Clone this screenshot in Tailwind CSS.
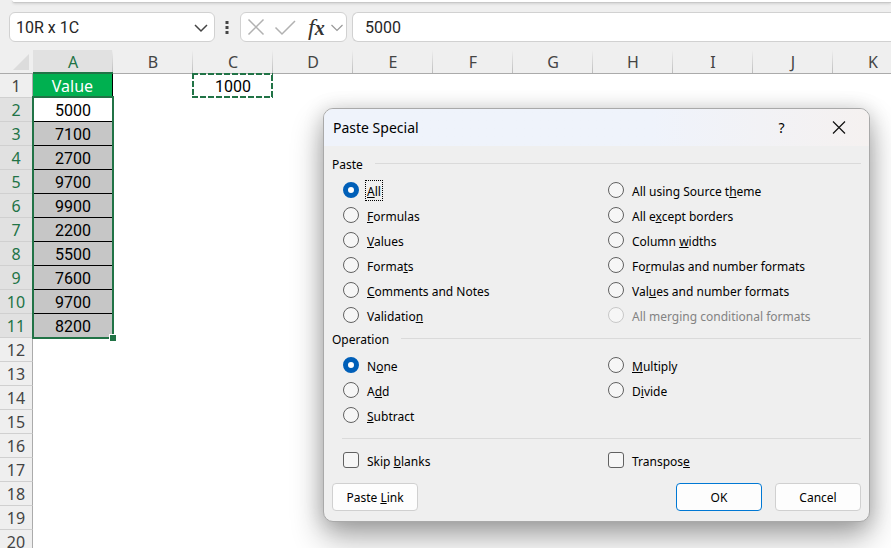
<!DOCTYPE html>
<html lang="en">
<head>
    <meta charset="UTF-8">
    <meta name="viewport" content="width=device-width, initial-scale=1.0">
    <title>Paste Special</title>
    <script src="https://cdn.jsdelivr.net/npm/@tailwindcss/browser@4"></script>
</head>
<body class="relative h-screen overflow-hidden bg-white font-['Noto_Sans',sans-serif] text-black">
    <!-- Formula bar -->
    <header class="bg-[#efefef]">
        <div class="ml-3 h-[3px] rounded-bl-lg border-b border-[#c8c8c8] bg-white shadow-sm"></div>
        <div class="flex h-[47px] items-start pt-[9px] pl-[9px]">
            <div class="flex h-[30px] w-[206px] items-center rounded-md border border-[#d1d1d1] bg-white pr-1 pl-1.5">
                <input type="text" value="10R x 1C" aria-label="Name box" class="min-w-0 flex-1 pt-px font-[Roboto,sans-serif] text-base text-[#262626] outline-none">
                <button type="button" aria-label="Open name list" class="p-px">
                    <svg class="size-4" viewBox="0 0 16 16" fill="none" stroke="#444" stroke-width="1.5"><path d="M2 6 8 12l6-6"/></svg>
                </button>
            </div>
            <svg class="mr-[9px] ml-2 mt-2 h-4 w-2" viewBox="0 0 8 16" fill="#444"><path d="M2.500 1h3v3h-3zM2.500 6h3v3h-3zM2.500 11h3v3h-3z"/></svg>
            <div class="flex h-[30px] w-[107px] items-center rounded-md border border-[#d1d1d1] bg-white">
                <button type="button" aria-label="Cancel entry" class="ml-1.5">
                    <svg class="size-[18px]" viewBox="0 0 18 18" fill="none" stroke="#b1b1b1" stroke-width="1.500"><path d="M1.500 1.500l15 15M16.500 1.500l-15 15"/></svg>
                </button>
                <button type="button" aria-label="Enter" class="ml-[9px]">
                    <svg class="h-[18px] w-[22px]" viewBox="0 0 22 18" fill="none" stroke="#b1b1b1" stroke-width="1.500"><path d="M1.500 9.500l6.500 6.500L21 3"/></svg>
                </button>
                <button type="button" aria-label="Insert function" class="ml-3 flex w-[18px] items-baseline font-['Liberation_Serif',serif] text-2xl leading-6 text-[#333] italic"><span>f</span><span class="text-xl leading-6 font-bold">x</span></button>
                <button type="button" aria-label="More functions" class="ml-1">
                    <svg class="size-3.5" viewBox="0 0 14 14" fill="none" stroke="#999" stroke-width="1.200"><path d="M1.500 5 7 10.500 12.500 5"/></svg>
                </button>
            </div>
            <input type="text" value="5000" aria-label="Formula" class="ml-[5px] h-[30px] min-w-0 flex-1 rounded-l-md border border-r-0 border-[#d1d1d1] bg-white px-3 font-[Roboto,sans-serif] text-base text-[#262626] outline-none">
        </div>
    </header>

    <!-- Worksheet -->
    <main class="relative">
        <table class="w-[913px] table-fixed border-separate border-spacing-0 text-center text-base leading-[22px]">
            <thead>
                <tr id="columns"></tr>
            </thead>
            <tbody id="rows"></tbody>
        </table>

        <!-- Selected range -->
        <div class="pointer-events-none absolute top-[46px] left-[32px] h-[243px] w-[82px] border-2 border-[#217346]">
            <span class="absolute -right-1 -bottom-1 size-[7px] border-t border-l border-white bg-[#217346]"></span>
        </div>
        <!-- Copied cell -->
        <svg class="pointer-events-none absolute top-[23px] left-[192px] h-[25px] w-[81px]" viewBox="0 0 81 25" fill="none" stroke="#217346" stroke-width="2" stroke-dasharray="6 2">
            <path d="M0 1H81M1 0V25M80 2V25M0 24H81"/>
        </svg>
    </main>

    <!-- Dialog -->
    <form role="dialog" aria-labelledby="dialogTitle" class="absolute top-[108px] left-[323px] w-[547px] rounded-[10px] border border-[#a9a9a9] bg-[#efefef] text-xs shadow-[0_16px_32px_rgba(0,0,0,0.32),0_2px_20px_rgba(0,0,0,0.18)]">
        <div class="flex h-[37px] items-center rounded-t-[9px] bg-linear-to-r from-[#eff3fb] from-60% to-[#f5f1f0] pr-px pl-[9px]">
            <h1 id="dialogTitle" class="flex-1 text-sm">Paste Special</h1>
            <button type="button" aria-label="Help" class="w-[55px] text-sm">?</button>
            <button type="button" aria-label="Close" class="flex w-[59px] justify-center">
                <svg class="size-3.5" viewBox="0 0 14 14" fill="none" stroke="#111" stroke-width="1.200"><path d="M1 0.500l12 12M13 0.500 1 12.500"/></svg>
            </button>
        </div>
        <div class="px-2 pt-[7px] pb-2.5">
            <fieldset>
                <legend class="flex h-[25px] w-full items-center gap-3 pb-1"><span class="pt-0.5">Paste</span><span class="h-px flex-1 bg-[#dadada]"></span></legend>
                <div id="pasteOptions" class="grid grid-flow-col grid-cols-[265px_1fr] grid-rows-6 pl-[11px]"></div>
            </fieldset>
            <fieldset>
                <legend class="flex h-[25px] w-full items-center gap-3 pb-1"><span class="pt-0.5">Operation</span><span class="h-px flex-1 bg-[#dadada]"></span></legend>
                <div id="operationOptions" class="grid grid-flow-col grid-cols-[265px_1fr] grid-rows-3 pl-[11px]"></div>
            </fieldset>
            <hr class="mt-2.5 mb-[9px] ml-2.5 border-[#dadada]">
            <div class="grid grid-cols-[265px_1fr] pl-[11px]">
                <label class="flex h-[25px] items-start gap-1.5 pt-0.5">
                    <input type="checkbox" class="mt-0.5 size-4 appearance-none rounded-[3px] border border-[#616161] bg-[#f6f6f6]">
                    <span class="px-0.5 pt-[3px] leading-[18px]">Skip <u>b</u>lanks</span>
                </label>
                <label class="flex h-[25px] items-start gap-1.5 pt-0.5">
                    <input type="checkbox" class="mt-0.5 size-4 appearance-none rounded-[3px] border border-[#616161] bg-[#f6f6f6]">
                    <span class="px-0.5 pt-[3px] leading-[18px]">Transpos<u>e</u></span>
                </label>
            </div>
            <div class="mt-2.5 flex gap-[13px]">
                <button type="button" class="mr-auto h-7 w-[86px] rounded border border-[#d0d0d0] bg-[#fdfdfd] pt-px">Paste <u>L</u>ink</button>
                <button type="submit" class="h-7 w-[86px] rounded border border-[#0078d4] bg-[#fdfdfd] pt-px">OK</button>
                <button type="button" class="h-7 w-[86px] rounded border border-[#d0d0d0] bg-[#fdfdfd] pt-px">Cancel</button>
            </div>
        </div>
    </form>

    <script>
        const columns = ['A', 'B', 'C', 'D', 'E', 'F', 'G', 'H', 'I', 'J', 'K'];
        const values = ['Value', 5000, 7100, 2700, 9700, 9900, 2200, 5500, 7600, 9700, 8200];

        // Underscore marks the access key
        const pasteOptions = [
            '_All', '_Formulas', '_Values', 'Forma_ts', '_Comments and Notes', 'Validatio_n',
            'All using Source t_heme', 'All e_xcept borders', 'Column _widths',
            'Fo_rmulas and number formats', 'Val_ues and number formats', 'All mer_ging conditional formats'
        ];
        const operationOptions = ['N_one', 'A_dd', '_Subtract', '_Multiply', 'D_ivide'];

        function renderHeader() {
            let html = `<th class="relative h-6 w-[33px] border-b border-[#ababab] bg-[#efefef] p-0">
                <svg class="absolute right-1 bottom-[3px] size-4" viewBox="0 0 16 16" fill="#dcdcdc"><path d="M16 0v16H0z"/></svg>
            </th>`;
            columns.forEach(name => {
                const state = name === 'A'
                    ? 'border-b-2 border-[#217346] bg-[#e1e1e1] pt-0.5 leading-5 text-[#217346]'
                    : 'border-b border-[#ababab] bg-[#efefef] pt-0 text-[#444]';
                html += `<th scope="col" class="relative h-6 w-20 px-0 pb-0 font-normal ${state}">${name}<span class="absolute inset-y-0 right-0 w-px bg-linear-to-b from-[#efefef] to-[#bdbdbd]"></span></th>`;
            });
            document.getElementById('columns').innerHTML = html;
        }

        function cellStyle(row, column) {
            if (column !== 'A' || row > 11) return 'pt-px';
            if (row === 1) return 'border-r border-black bg-[#00b050] text-white';
            if (row === 2) return 'border-b border-black bg-white pt-[3px] font-[Roboto,sans-serif] leading-5';
            return 'border-b border-black bg-[#c6c6c6] pt-[3px] font-[Roboto,sans-serif] leading-5';
        }

        function renderRows() {
            let html = '';
            for (let row = 1; row <= 20; row++) {
                const state = row >= 2 && row <= 11 ? 'bg-[#e1e1e1] text-[#217346]' : 'bg-[#efefef] text-[#444]';
                html += `<tr><th scope="row" class="h-6 border-r border-b border-r-[#ababab] border-b-[#d0d0d0] p-0 pt-px font-normal ${state}">${row}</th>`;
                columns.forEach(column => {
                    let value = '';
                    if (column === 'A') value = values[row - 1] || '';
                    if (column === 'C' && row === 1) value = '<span class="font-[Roboto,sans-serif]">1000</span>';
                    html += `<td class="h-6 px-0 pb-0 ${cellStyle(row, column)}">${value}</td>`;
                });
                html += '</tr>';
            }
            document.getElementById('rows').innerHTML = html;
        }

        function renderOptions(id, options) {
            document.getElementById(id).innerHTML = options.map((option, index) => {
                const checked = index === 0 ? 'checked' : '';
                const disabled = option.includes('conditional') ? 'disabled' : '';
                const focus = option === '_All' ? 'outline-1 -outline-offset-1 outline-dotted outline-black' : '';
                const text = option.replace(/_(.)/, '<u>$1</u>');
                return `<label class="flex h-[25px] items-start gap-1.5 pt-0.5 has-disabled:text-[#838383]">
                    <input type="radio" name="${id}" ${checked} ${disabled} class="mt-0.5 size-4 appearance-none rounded-full border border-[#616161] bg-[#f6f6f6] checked:border-5 checked:border-[#005fb8] checked:bg-white disabled:border-[#c8c8c8]">
                    <span class="px-0.5 pt-[3px] leading-[18px] ${focus}">${text}</span>
                </label>`;
            }).join('');
        }

        renderHeader();
        renderRows();
        renderOptions('pasteOptions', pasteOptions);
        renderOptions('operationOptions', operationOptions);
    </script>
</body>
</html>
